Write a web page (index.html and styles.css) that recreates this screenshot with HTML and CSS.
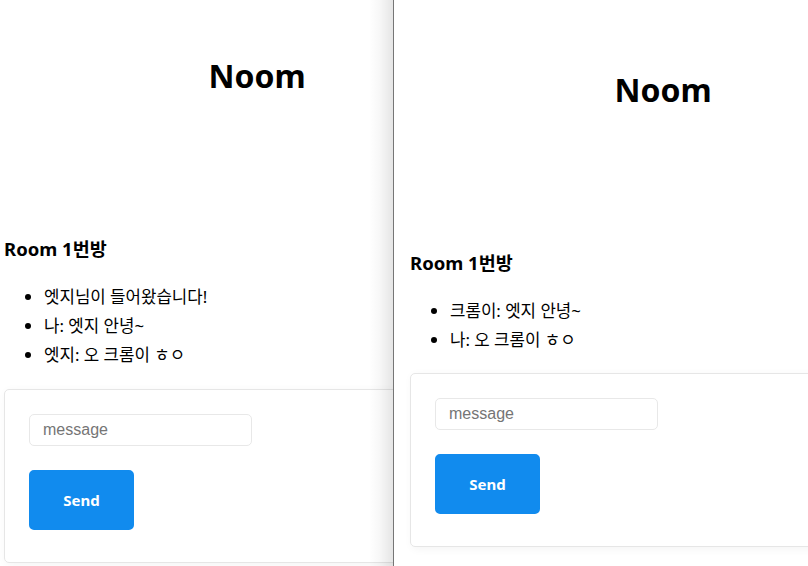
FILE: index.html
```html
<!DOCTYPE html>
<html lang="ko">
<head>
<meta charset="utf-8">
<title>Noom</title>
<link rel="stylesheet" href="styles.css">
</head>
<body>
<div class="desk">
  <div class="win win-left">
    <div class="page">
      <header class="head"><h1>Noom</h1></header>
      <main>
        <h3 class="room">Room 1번방</h3>
        <ul class="msgs">
          <li>엣지님이 들어왔습니다!</li>
          <li>나: 엣지 안녕~</li>
          <li>엣지: 오 크롬이 ㅎㅇ</li>
        </ul>
        <form class="card">
          <input class="msg-input" type="text" placeholder="message">
          <button class="send" type="button">Send</button>
        </form>
      </main>
    </div>
  </div>
  <div class="seam"></div>
  <div class="win win-right">
    <div class="page page-right">
      <header class="head"><h1>Noom</h1></header>
      <main>
        <h3 class="room">Room 1번방</h3>
        <ul class="msgs">
          <li>크롬이: 엣지 안녕~</li>
          <li>나: 오 크롬이 ㅎㅇ</li>
        </ul>
        <form class="card">
          <input class="msg-input" type="text" placeholder="message">
          <button class="send" type="button">Send</button>
        </form>
      </main>
    </div>
  </div>
</div>
</body>
</html>
```

FILE: styles.css
```css
html, body {
  margin: 0;
  padding: 0;
  background: #fff;
}
body {
  width: 808px;
  height: 566px;
  overflow: hidden;
  font-family: "Noto Sans", "Noto Sans CJK KR", sans-serif;
  color: #000;
}
.desk {
  display: flex;
  height: 566px;
}
.win {
  position: relative;
  overflow: hidden;
  height: 566px;
  background: #fff;
}
.win-left {
  width: 393px;
  flex: none;
}
.win-left::after {
  content: "";
  position: absolute;
  top: 0;
  right: 0;
  width: 24px;
  height: 100%;
  background: linear-gradient(to right, rgba(0,0,0,0) 0%, rgba(0,0,0,0.03) 45%, rgba(0,0,0,0.1) 100%);
}
.seam {
  width: 1px;
  flex: none;
  background: #767676;
}
.win-right {
  flex: 1;
}
.page {
  width: 538px;
  box-sizing: border-box;
  padding: 0 16px;
}
.win-left .page {
  margin-left: -12px;
}
.page-right {
  padding-top: 14px;
}
.head h1 {
  margin: 56px 0 0;
  font-size: 32px;
  line-height: 40px;
  font-weight: 700;
  text-align: center;
}
.room {
  margin: 141px 0 0;
  font-size: 18.5px;
  line-height: 24px;
  font-weight: 700;
}
.msgs {
  margin: 21px 0 20px;
  padding-left: 40px;
}
.page-right .msgs {
  margin-bottom: 19px;
}
.msgs li {
  font-size: 16.8px;
  line-height: 23px;
  padding: 3px 0;
}
.card {
  display: flex;
  flex-direction: column;
  align-items: flex-start;
  gap: 24px;
  border: 1px solid #e6e6e6;
  border-radius: 5px;
  box-shadow: 2px 2px 10px #f4f4f4;
  padding: 24px 24px 32px;
}
.msg-input {
  box-sizing: border-box;
  width: 223px;
  height: 32px;
  margin: 0;
  padding: 0 13px;
  border: 1px solid #e8e8e8;
  border-radius: 5px;
  font-family: "Liberation Sans", Arial, sans-serif;
  font-size: 16px;
  color: #333;
  background: #fff;
  outline: none;
}
.msg-input::placeholder {
  color: #757575;
}
.send {
  box-sizing: border-box;
  width: 105px;
  height: 60px;
  margin: 0;
  border: 2px solid #118bee;
  border-radius: 5px;
  background: #118bee;
  color: #fff;
  font-family: "Noto Sans", sans-serif;
  font-size: 15px;
  font-weight: 700;
  cursor: pointer;
}
```
